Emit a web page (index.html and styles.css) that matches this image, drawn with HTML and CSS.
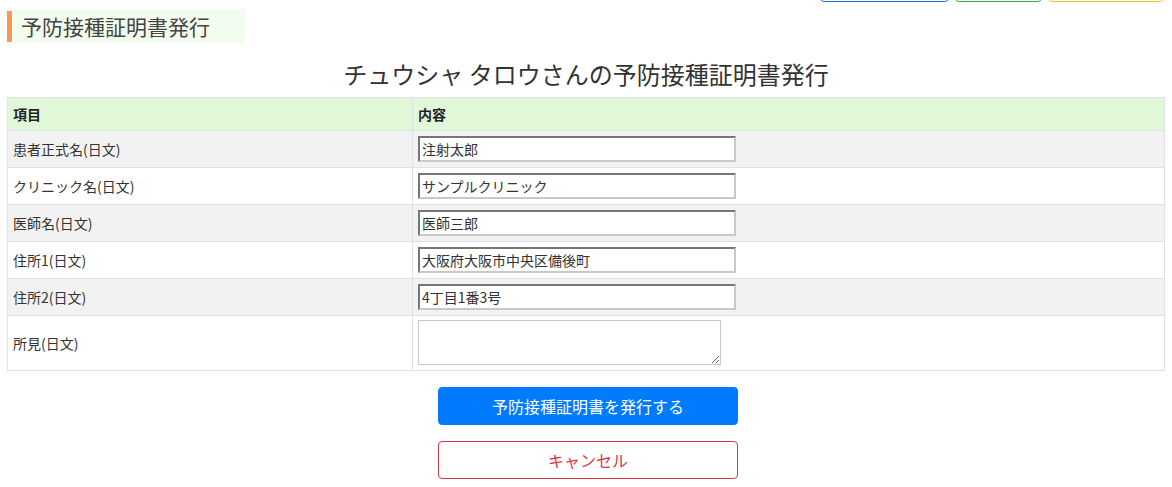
FILE: index.html
```html
<!DOCTYPE html>
<html lang="ja">
<head>
<meta charset="utf-8">
<title>予防接種証明書発行</title>
<link rel="stylesheet" href="styles.css">
</head>
<body>
<div class="topbar">
  <button class="tb tb-blue" type="button"></button>
  <button class="tb tb-green" type="button"></button>
  <button class="tb tb-yellow" type="button"></button>
</div>
<div class="page">
  <div class="page-head">
    <div class="page-head-bar"></div>
    <div class="page-head-text">予防接種証明書発行</div>
  </div>
  <h1 class="title">チュウシャ タロウさんの予防接種証明書発行</h1>
  <table class="form-table">
    <thead>
      <tr><th class="col-label">項目</th><th>内容</th></tr>
    </thead>
    <tbody>
      <tr><td class="col-label">患者正式名(日文)</td><td><input class="field" type="text" value="注射太郎"></td></tr>
      <tr><td class="col-label">クリニック名(日文)</td><td><input class="field" type="text" value="サンプルクリニック"></td></tr>
      <tr><td class="col-label">医師名(日文)</td><td><input class="field" type="text" value="医師三郎"></td></tr>
      <tr><td class="col-label">住所1(日文)</td><td><input class="field" type="text" value="大阪府大阪市中央区備後町"></td></tr>
      <tr><td class="col-label">住所2(日文)</td><td><input class="field" type="text" value="4丁目1番3号"></td></tr>
      <tr><td class="col-label">所見(日文)</td><td class="memo-cell"><textarea class="memo"></textarea></td></tr>
    </tbody>
  </table>
  <div class="actions">
    <button class="btn btn-primary" type="button">予防接種証明書を発行する</button>
    <button class="btn btn-cancel" type="button">キャンセル</button>
  </div>
</div>
</body>
</html>
```
FILE: styles.css
```css
html, body {
  margin: 0;
  padding: 0;
  background: #fff;
}
body {
  font-family: "Noto Sans CJK JP", "Noto Sans", sans-serif;
  color: #333;
  font-size: 14px;
  line-height: 20px;
}
.topbar {
  display: flex;
  justify-content: flex-end;
  gap: 6px;
  padding-right: 8px;
  margin-top: -28px;
  height: 30px;
}
.tb {
  height: 30px;
  background: #fff;
  border-radius: 4px;
  padding: 0;
}
.tb-blue { width: 129px; border: 1px solid #1a73e8; }
.tb-green { width: 87px; border: 1px solid #34a853; }
.tb-yellow { width: 116px; border: 1px solid #fbc02d; }
.page {
  padding: 0 7px;
}
.page-head {
  display: flex;
  align-items: center;
  margin-top: 7px;
  height: 34px;
}
.page-head-bar {
  width: 5px;
  height: 31px;
  background: #f79853;
}
.page-head-text {
  width: 225px;
  height: 34px;
  padding-left: 9px;
  background: #f3fdef;
  color: #444;
  font-size: 21px;
  line-height: 34px;
}
.title {
  margin: 14px 0 6px;
  text-align: center;
  font-size: 24px;
  font-weight: normal;
  line-height: 34px;
  color: #333;
}
.form-table {
  width: 100%;
  border-collapse: collapse;
  table-layout: fixed;
}
.form-table th,
.form-table td {
  border: 1px solid #dee2e6;
  padding: 5px;
  text-align: left;
  vertical-align: middle;
}
.form-table th {
  background: #e0f8d7;
  font-weight: bold;
  color: #222;
  font-size: 14px;
  height: 22px;
}
.form-table .col-label {
  width: 394px;
  font-size: 14px;
}
.form-table td {
  height: 26px;
}
.form-table td.memo-cell {
  padding-top: 4px;
}
.form-table tbody tr:nth-child(odd) {
  background: #f2f2f2;
}
.form-table tbody tr:nth-child(even) {
  background: #fff;
}
.field {
  display: block;
  box-sizing: border-box;
  width: 318px;
  height: 26px;
  margin: 0;
  padding: 0 2px;
  border-style: solid;
  border-width: 2px;
  border-color: #767676 #c8c8c8 #c8c8c8 #767676;
  background: #fff;
  font-family: inherit;
  font-size: 14px;
  color: #333;
}
.memo {
  display: block;
  box-sizing: border-box;
  width: 303px;
  height: 45px;
  margin: 0;
  border: 1px solid #c8c8c8;
  background: #fff;
  font-family: inherit;
  font-size: 14px;
}
.actions {
  display: flex;
  flex-direction: column;
  align-items: center;
  gap: 16px;
  margin-top: 16px;
  padding-left: 4px;
}
.btn {
  box-sizing: border-box;
  width: 300px;
  height: 38px;
  border-radius: 4px;
  font-family: inherit;
  font-size: 16px;
  cursor: pointer;
}
.btn-primary {
  background: #007bff;
  border: 1px solid #007bff;
  color: #fff;
}
.btn-cancel {
  background: #fff;
  border: 1px solid #dc3545;
  color: #dc3545;
}
```
